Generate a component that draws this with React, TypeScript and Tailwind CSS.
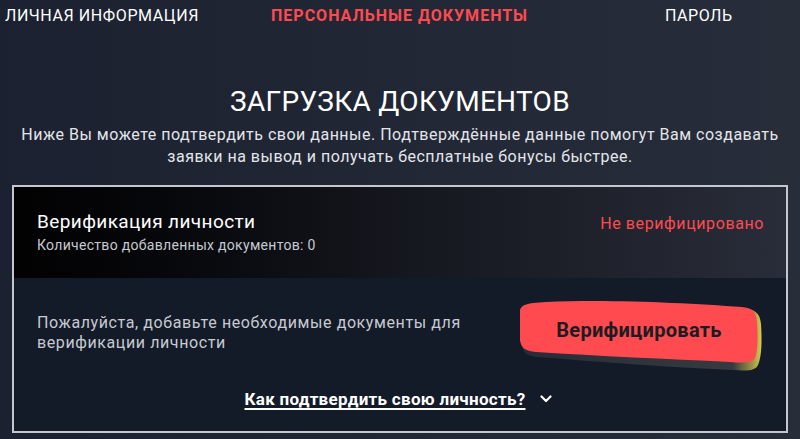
import React from 'react';

const tabs = [
  { label: 'Личная информация', active: false },
  { label: 'Персональные документы', active: true },
  { label: 'Пароль', active: false },
];

function VerifyButton() {
  return (
    <button className="relative w-[246px] h-[76px] shrink-0">
      <svg className="absolute inset-0" width="246" height="76" viewBox="0 0 246 76">
        <defs>
          <linearGradient id="edge" x1="0" y1="0" x2="1" y2="0">
            <stop offset="0" stopColor="#262c38" />
            <stop offset="0.88" stopColor="#363a40" />
            <stop offset="0.96" stopColor="#9a9347" />
            <stop offset="1" stopColor="#d6cb4e" />
          </linearGradient>
        </defs>
        <path
          d="M4 16 C4 8 10 5 30 4 C90 1 170 4 224 8 C236 9 242 12 243 24 C244 40 244 56 240 65 C237 71 230 71 214 70 C150 67 80 62 20 57 C8 56 5 53 4 44 Z"
          fill="url(#edge)"
        />
        <path
          d="M2 12 C2 5 8 3 28 2 C90 -1 170 3 224 7 C234 8 238 11 239 22 C240 36 240 50 237 58 C234 63 226 63 212 62 C150 59 80 56 18 52 C7 51 3 48 2 40 Z"
          fill="#ff4a50"
        />
      </svg>
      <span className="absolute left-0 right-[4px] top-[17px] text-center text-[20px] leading-[26px] tracking-[0.3px] font-bold text-[#1c1c22]">
        Верифицировать
      </span>
    </button>
  );
}

function Chevron() {
  return (
    <svg width="12" height="8" viewBox="0 0 12 8" fill="none">
      <path d="M1.5 1.5 L6 6 L10.5 1.5" stroke="white" strokeWidth="2.2" strokeLinecap="round" strokeLinejoin="round" />
    </svg>
  );
}

export default function App() {
  return (
    <div className="w-[800px] h-[439px] overflow-hidden bg-gradient-to-r from-[#1b2130] to-[#282d3a] text-white font-['Roboto',sans-serif]">
      {/* Tabs */}
      <div className="grid grid-cols-[266px_394px_1fr] pl-[5px] pt-[5px] h-[30px]">
        {tabs.map(t => (
          <span
            key={t.label}
            className={`uppercase text-[16px] leading-[22px] whitespace-nowrap ${t.active ? 'text-[#ff4a50] font-bold tracking-[1px]' : 'text-white tracking-[0.6px]'}`}
          >
            {t.label}
          </span>
        ))}
      </div>

      {/* Heading */}
      <div className="text-center mt-[56px]">
        <h1 className="text-[28px] leading-[32px] uppercase tracking-[0.3px]">Загрузка документов</h1>
        <p className="mt-[6px] text-[16px] leading-[22px] tracking-[0.5px] text-[#e3e5ea] px-[16px]">
          Ниже Вы можете подтвердить свои данные. Подтверждённые данные помогут Вам создавать заявки на вывод и получать бесплатные бонусы быстрее.
        </p>
      </div>

      {/* Card */}
      <div className="mx-[12px] mt-[17px] h-[248px] border-2 border-[#c4c8ce] flex flex-col">
        <div className="h-[91px] shrink-0 flex justify-between items-start pl-[23px] pr-[22px] pt-[23px] bg-gradient-to-r from-[#020203] via-[#15171e] to-[#292d39]">
          <div>
            <div className="text-[19px] leading-[24px] tracking-[0.4px]">Верификация личности</div>
            <div className="text-[14px] leading-[18px] tracking-[0.3px] text-[#c6c9d0] mt-[2px]">Количество добавленных документов: 0</div>
          </div>
          <div className="text-[16px] leading-[24px] tracking-[0.6px] text-[#ff4a50] mt-[2px]">Не верифицировано</div>
        </div>
        <div className="flex-1 bg-[#131b29] flex flex-col">
          <div className="flex justify-between items-start pl-[23px] pr-[22px] pt-[22px]">
            <p className="mt-[13px] text-[16px] leading-[20px] tracking-[0.6px] text-[#c7cad1] w-[440px]">
              Пожалуйста, добавьте необходимые документы для верификации личности
            </p>
            <VerifyButton />
          </div>
          <div className="flex justify-center items-center gap-[14px] mt-[12px] pr-[4px]">
            <a className="text-[17px] leading-[22px] tracking-[0.3px] font-bold underline underline-offset-[3px] decoration-[1.5px]">
              Как подтвердить свою личность?
            </a>
            <Chevron />
          </div>
        </div>
      </div>
    </div>
  );
}
